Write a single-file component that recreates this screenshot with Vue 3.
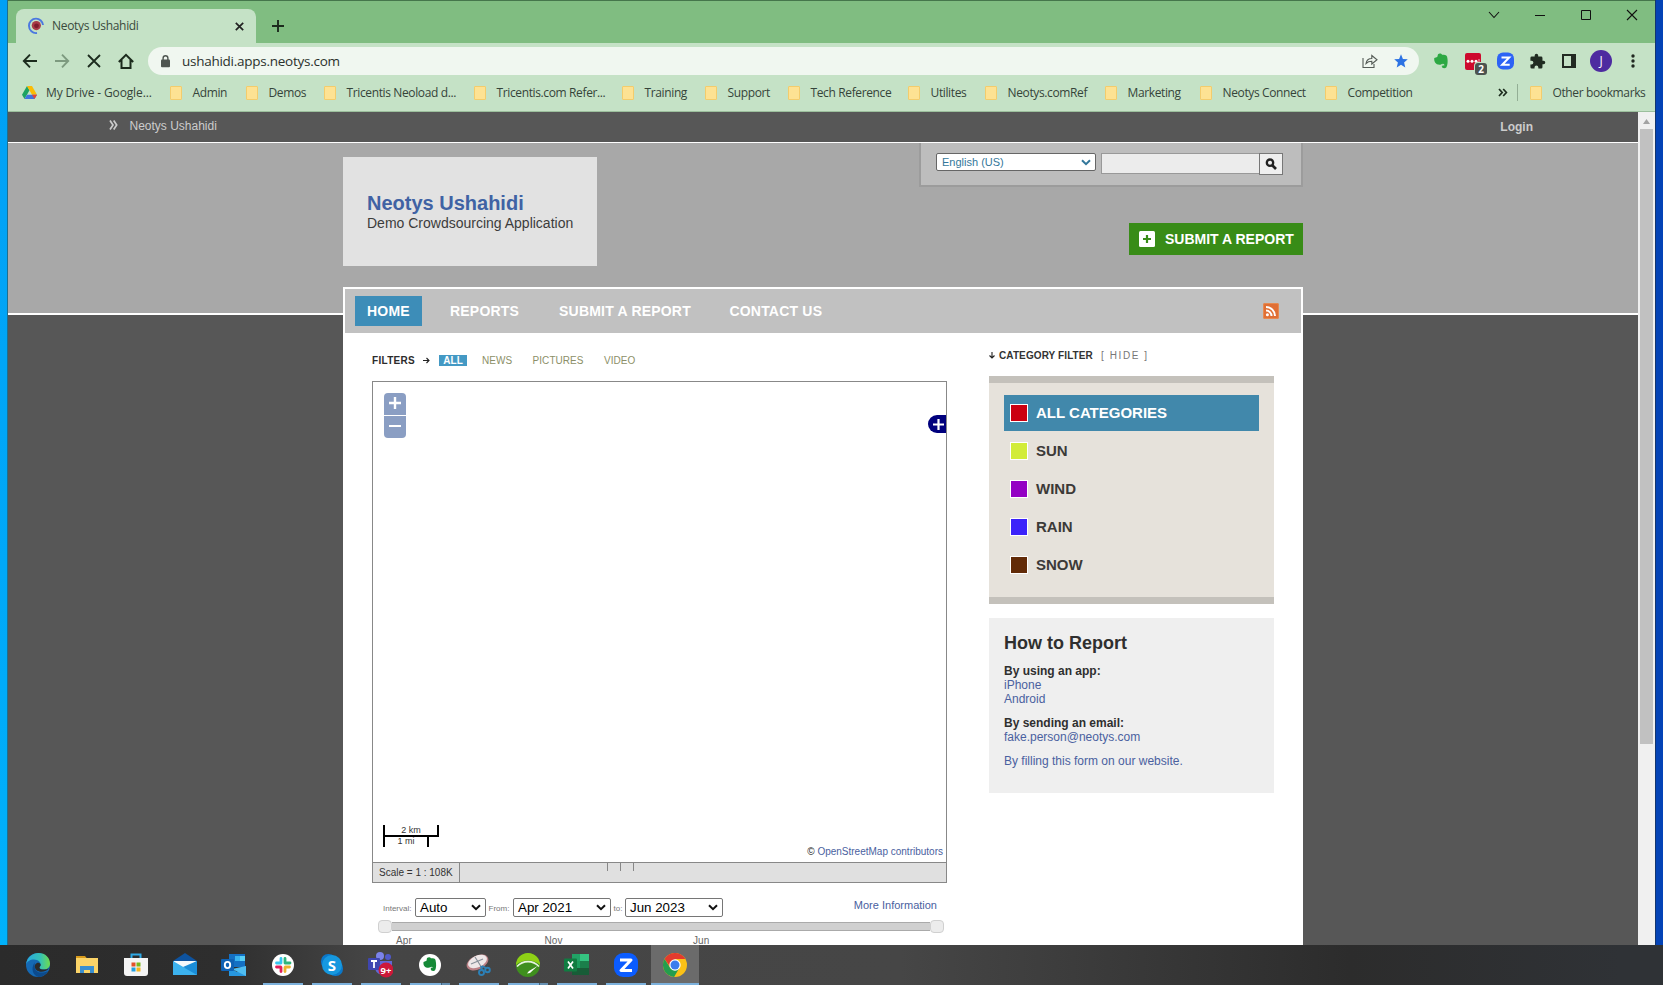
<script setup>
const bookmarks = [
  'Admin', 'Demos', 'Tricentis Neoload d...', 'Tricentis.com Refer...', 'Training', 'Support',
  'Tech Reference', 'Utilites', 'Neotys.comRef', 'Marketing', 'Neotys Connect', 'Competition'
]
const categories = [
  { name: 'ALL CATEGORIES', color: '#cb0010', active: true },
  { name: 'SUN', color: '#d2ec38' },
  { name: 'WIND', color: '#9400c4' },
  { name: 'RAIN', color: '#3b22fa' },
  { name: 'SNOW', color: '#622b08' }
]
</script>

<template>
  <div class="desktop">
    <div class="upper">
      <div class="strip left"></div>
      <div class="window">
        <header class="tabs">
          <div class="tab">
            <svg class="fav" width="16" height="18" viewBox="0 0 16 18">
              <circle cx="8.3" cy="8.6" r="4.6" fill="#a83a48" /><circle cx="8.5" cy="8.8" r="2.4" fill="#7c1b2d" />
              <path d="M8 1.6A7 7 0 0 1 15 8M8 1.6A7 7 0 0 0 1 9a7 7 0 0 0 8 7" fill="none" stroke="#4b78e0" stroke-width="1.9" />
            </svg>
            <span class="tabname">Neotys Ushahidi</span>
            <svg width="9" height="9" viewBox="0 0 9 9"><path d="M.8.8l7.4 7.4M8.2.8L.8 8.2" stroke="#222" stroke-width="1.7" /></svg>
          </div>
          <svg class="newtab" width="12" height="12" viewBox="0 0 12 12"><path d="M6 0v12M0 6h12" stroke="#1c2b1d" stroke-width="1.9" /></svg>
          <div class="controls">
            <svg width="12" height="12" viewBox="0 0 12 12"><path d="M1 3l5 5.5L11 3" fill="none" stroke="#111" stroke-width="1.1" /></svg>
            <svg width="12" height="12" viewBox="0 0 12 12"><path d="M1 6.5h10" stroke="#111" /></svg>
            <svg width="12" height="12" viewBox="0 0 12 12"><path d="M1.5 1.5h9v9h-9z" fill="none" stroke="#111" /></svg>
            <svg width="12" height="12" viewBox="0 0 12 12"><path d="M1 1l10 10M11 1L1 11" stroke="#111" stroke-width="1.1" /></svg>
          </div>
        </header>

        <div class="toolbar">
          <div class="navicons">
            <svg width="16" height="16" viewBox="0 0 16 16" fill="none" stroke="#1c2b1d" stroke-width="1.9"><path d="M15 8H2M8 1.7L1.8 8 8 14.3" /></svg>
            <svg width="16" height="16" viewBox="0 0 16 16" fill="none" stroke="#7d9a7f" stroke-width="1.9"><path d="M1 8h13M8 1.7L14.2 8 8 14.3" /></svg>
            <svg width="16" height="16" viewBox="0 0 16 16" fill="none" stroke="#1c2b1d" stroke-width="1.8"><path d="M2 2l12 12M14 2L2 14" /></svg>
            <svg width="16" height="16" viewBox="0 0 16 16" fill="none" stroke="#1c2b1d" stroke-width="2"><path d="M.8 9L8 1.8 15.2 9M3.5 7v8h9V7" /></svg>
          </div>
          <div class="urlbar">
            <svg class="lock" width="9" height="13" viewBox="0 0 9 13"><rect y="4.6" width="9" height="7.6" rx="1" fill="#4e5550" /><path d="M2.1 5V3.2a2.4 2.4 0 0 1 4.8 0V5" fill="none" stroke="#4e5550" stroke-width="1.4" /></svg>
            <span class="url">ushahidi.apps.neotys.com</span>
            <svg class="share" width="16" height="16" viewBox="0 0 16 16" fill="none" stroke="#555c57" stroke-width="1.1"><path d="M1 5v9.5h11V11M4 10.5c.5-3 2.4-5 5.8-5V2.5L15 6.8 9.8 11V8.3c-2.600 0-4.200.600-5.800 2.200z" /></svg>
            <svg width="14" height="14" viewBox="0 0 14 14"><path d="M7 .3l1.900 4.600 4.900.4-3.700 3.200 1.200 4.900L7 10.800l-4.300 2.600 1.200-4.900L.2 5.300l4.900-.4z" fill="#2c72e3" /></svg>
          </div>
          <div class="ext">
            <svg width="18" height="18" viewBox="0 0 24 24"><path d="M3 8l4-1.500L8 3c2-1.600 4.500-.8 5.500.5 3 .2 5.500 0 6.500 2.500 1.500 5 1 12-1 14.500-1.500 1.800-6 1.500-6-1.500s3-3 4-2.200c-3-3-4 .2-7 .2-5 0-7.500-4-7-9z" fill="#2da843" /><path d="M13 19c0-2.500 2.500-2.500 3-1.200" fill="none" stroke="#c5e2c6" stroke-width="1.600" /></svg>
            <div class="lastpass">
              <svg width="16" height="17" viewBox="0 0 16 17"><rect width="16" height="17" rx="2" fill="#cd0a2d" /><circle cx="3" cy="8.300" r="1.500" fill="#fff" /><circle cx="7" cy="8.300" r="1.500" fill="#fff" /><circle cx="11" cy="8.300" r="1.500" fill="#fff" /><path d="M14 6v4.500" stroke="#f5b6c0" /></svg>
              <span class="count">2</span>
            </div>
            <svg width="17" height="18" viewBox="0 0 17 18"><rect y=".5" width="17" height="17" rx="6" fill="#2d63f5" /><path d="M4.500 5.500h7.700l-7 7.200h7.500" fill="none" stroke="#fff" stroke-width="2" /></svg>
            <svg width="17" height="17" viewBox="0 0 24 24"><path d="M20.500 11H19V7a2 2 0 0 0-2-2h-4V3.500a2.500 2.500 0 0 0-5 0V5H4a2 2 0 0 0-2 2v3.800h1.500a2.700 2.700 0 0 1 0 5.400H2V20a2 2 0 0 0 2 2h3.800v-1.500a2.700 2.700 0 0 1 5.400 0V22H17a2 2 0 0 0 2-2v-4h1.500a2.500 2.500 0 0 0 0-5z" fill="#202c21" /></svg>
            <svg width="14" height="14" viewBox="0 0 14 14"><path d="M1 1h12v12H1z" fill="none" stroke="#222a22" stroke-width="2" /><path d="M9 1h4v12H9z" fill="#222a22" /></svg>
            <span class="avatar">J</span>
            <svg width="4" height="14" viewBox="0 0 4 14" fill="#202820"><circle cx="2" cy="2" r="1.700" /><circle cx="2" cy="7" r="1.700" /><circle cx="2" cy="12" r="1.700" /></svg>
          </div>
        </div>

        <div class="bookmarks">
          <div class="bm drive">
            <svg width="15" height="13" viewBox="0 0 15 13"><path d="M5 0L0 8.700l2.500 4.300 5-8.700z" fill="#1ea362" /><path d="M5 0h5l5 8.700h-5z" fill="#fbbc05" /><path d="M5 8.700h10L12.500 13h-10z" fill="#4175df" /><path d="M10 8.700h5L12.500 13z" fill="#ea4335" /></svg>
            <span>My Drive - Google...</span>
          </div>
          <div v-for="b in bookmarks" :key="b" class="bm"><i class="folder"></i><span>{{ b }}</span></div>
          <svg class="more" width="10" height="9" viewBox="0 0 10 9"><path d="M1 1l3.200 3.500L1 8M5.200 1l3.200 3.500L5.200 8" fill="none" stroke="#1c2b1d" stroke-width="1.700" /></svg>
          <div class="bm other"><i class="folder"></i><span>Other bookmarks</span></div>
        </div>

        <div class="viewport">
          <div class="page">
            <div class="topbar">
              <svg width="9" height="10" viewBox="0 0 9 10"><path d="M1 .5l3 4.500-3 4.500M4.700.5l3 4.500-3 4.500" fill="none" stroke="#ccc" stroke-width="1.700" /></svg>
              <span class="site">Neotys Ushahidi</span><span class="login">Login</span>
            </div>
            <div class="content">
              <div class="masthead">
                <div class="logo"><h1>Neotys Ushahidi</h1><p>Demo Crowdsourcing Application</p></div>
                <div class="tools">
                  <div class="langpanel">
                    <div class="lang"><span>English (US)</span><svg width="10" height="7" viewBox="0 0 10 7"><path d="M1 1.200l4 4 4-4" fill="none" stroke="#33779b" stroke-width="2" /></svg></div>
                    <div class="search"></div>
                    <div class="go"><svg width="12" height="12" viewBox="0 0 12 12" fill="none" stroke="#222"><circle cx="5" cy="4.700" r="3.200" stroke-width="2.300" /><path d="M7 7l4 4" stroke-width="2.600" /></svg></div>
                  </div>
                  <div class="submit"><svg width="16" height="16" viewBox="0 0 16 16"><rect width="16" height="16" rx="1.500" fill="#fff" /><path d="M8 4v8M4 8h8" stroke="#388c17" stroke-width="2.200" /></svg><span>SUBMIT A REPORT</span></div>
                </div>
              </div>

              <main>
                <nav>
                  <a class="on">HOME</a><a>REPORTS</a><a>SUBMIT A REPORT</a><a>CONTACT US</a>
                  <svg class="rss" width="16" height="16" viewBox="0 0 16 16"><rect width="16" height="16" rx="2" fill="#e06f35" /><rect x=".5" y=".5" width="15" height="15" rx="1.500" fill="none" stroke="#e78a50" /><g fill="none" stroke="#fff" stroke-width="2"><path d="M3 7.500a5.500 5.500 0 0 1 5.500 5.500M3 4a9 9 0 0 1 9 9" /></g><circle cx="4.400" cy="11.700" r="1.500" fill="#fff" /></svg>
                </nav>
                <div class="cols">
                  <section class="maincol">
                    <div class="filters">
                      <b>FILTERS</b>
                      <svg width="7" height="7" viewBox="0 0 7 7"><path d="M0 3.500h6M3.500 1L6 3.500 3.500 6" fill="none" stroke="#222" stroke-width="1.100" /></svg>
                      <span class="all">ALL</span><span>NEWS</span><span>PICTURES</span><span>VIDEO</span>
                    </div>
                    <div class="map">
                      <div class="zoomers">
                        <svg width="22" height="22" viewBox="0 0 22 22"><path d="M11 4v12M5 10h12" stroke="#fff" stroke-width="2.400" /></svg>
                        <svg width="22" height="22" viewBox="0 0 22 22"><path d="M5 10h12" stroke="#fff" stroke-width="2.200" /></svg>
                      </div>
                      <div class="layers"><svg width="11" height="11" viewBox="0 0 11 11"><path d="M5.500 0v11M0 5.500h11" stroke="#fff" stroke-width="2.200" /></svg></div>
                      <div class="scalebar"><div class="km">2 km</div><div class="mi">1 mi</div></div>
                      <div class="credit">© <a>OpenStreetMap contributors</a></div>
                    </div>
                    <div class="status"><span>Scale = 1 : 108K</span><i></i><i></i><i></i></div>
                    <div class="timeline">
                      <label class="l1">Interval:</label>
                      <div class="sel s1">Auto<svg width="10" height="7" viewBox="0 0 10 7"><path d="M1 1.200l4 4 4-4" /></svg></div>
                      <label class="l2">From:</label>
                      <div class="sel s2">Apr 2021<svg width="10" height="7" viewBox="0 0 10 7"><path d="M1 1.200l4 4 4-4" /></svg></div>
                      <label class="l3">to:</label>
                      <div class="sel s2">Jun 2023<svg width="10" height="7" viewBox="0 0 10 7"><path d="M1 1.200l4 4 4-4" /></svg></div>
                      <a>More Information</a>
                    </div>
                    <div class="slider"><i></i><div class="track"></div><i></i></div>
                    <div class="ticks"><span>Apr</span><span>Nov</span><span>Jun</span></div>
                  </section>
                  <aside>
                    <div class="cathead">
                      <svg width="6" height="7" viewBox="0 0 6 7"><path d="M3 0v6M.5 3.500L3 6l2.500-2.500" fill="none" stroke="#222" stroke-width="1.100" /></svg>
                      <b>CATEGORY FILTER</b><span>[ HIDE ]</span>
                    </div>
                    <div class="cats">
                      <div v-for="c in categories" :key="c.name" class="cat" :class="{ active: c.active }">
                        <i :style="{ background: c.color }"></i><b>{{ c.name }}</b>
                      </div>
                    </div>
                    <div class="howto">
                      <h2>How to Report</h2>
                      <p><b>By using an app:</b><br /><a>iPhone</a><br /><a>Android</a></p>
                      <p><b>By sending an email:</b><br /><a>fake.person@neotys.com</a></p>
                      <p><a>By filling this form on our website.</a></p>
                    </div>
                  </aside>
                </div>
              </main>
            </div>
          </div>
          <div class="scroll"><svg width="7" height="5" viewBox="0 0 7 5"><path d="M0 5L3.500 0 7 5z" fill="#a3a3a3" /></svg><div class="thumb"></div></div>
        </div>
      </div>
      <div class="strip right"></div>
    </div>

    <footer>
      <div class="app"><svg width="24" height="24" viewBox="0 0 24 24"><defs><linearGradient id="e1" x1="0" x2="1"><stop offset="0" stop-color="#2aa9e0" /><stop offset=".6" stop-color="#35c1b5" /><stop offset="1" stop-color="#6fdc4c" /></linearGradient></defs><circle cx="12" cy="12" r="12" fill="#1569b4" /><path d="M0 11.500C1 4 6.500 0 12.500 0 19.500 0 24 5 24 10.500c0 4-3 6-6.500 6-3 0-4.500-1.200-4-2.300C17 10 12 6.500 8 6.500c-4 0-7 2-8 5z" fill="url(#e1)" /><path d="M8.500 13c0 6 6 8.500 13.500 5-2 3.500-5.500 6-9.500 6C7 22.500 4.500 16 8.500 9.500z" fill="#0c4a8c" /><path d="M13.500 14.200c-.5 1.500 2 2.500 5 2.300 1.500-.1 3-.5 4.300-1.300-2 4-12.500 5.500-14-1-.5-4 4.500-6.200 5.900-2.500.2 1-.8 1.700-1.200 2.500z" fill="#2b2b2b" /></svg></div>
      <div class="app"><svg width="24" height="24" viewBox="0 0 24 24"><path d="M1 3h9l2 2.500H1z" fill="#d99b1c" /><path d="M1 5h22v15H1z" fill="#fbd468" /><path d="M5 20v-7h14v7h-4v-3H9v3z" fill="#3a8fd0" /></svg></div>
      <div class="app"><svg width="24" height="24" viewBox="0 0 24 24"><path d="M7.500 6V1.500h9V6" fill="none" stroke="#2ea9e6" stroke-width="2" /><path d="M0 5h24v15a3 3 0 0 1-3 3H3a3 3 0 0 1-3-3z" fill="#f4f4f4" /><path d="M7.500 9.500h4v4h-4z" fill="#e3502b" /><path d="M12.500 9.500h4v4h-4z" fill="#7bb71c" /><path d="M7.500 14.500h4v4h-4z" fill="#249fe0" /><path d="M12.500 14.500h4v4h-4z" fill="#f5b51d" /></svg></div>
      <div class="app"><svg width="24" height="24" viewBox="0 0 24 24"><path d="M0 8l12-8 12 8v3H0z" fill="#0e539f" /><path d="M1 8h22v9H1z" fill="#f4f8fb" /><path d="M0 8l12 7L24 8v14H0z" fill="#3cb2ee" /><path d="M24 8v14L10 14z" fill="#1a8dd8" /></svg></div>
      <div class="app"><svg width="25" height="24" viewBox="0 0 25 24"><path d="M8 1h16v13H8z" fill="#1470c4" /><path d="M14 3h5v5h-5z" fill="#39b3ef" /><path d="M19 3h5v5h-5z" fill="#58cff6" /><path d="M8 14l8 5 9-6v10H8z" fill="#2797df" /><path d="M25 13v10L11 16z" fill="#50bdf0" /><rect y="6" width="13" height="12" rx="1" fill="#0f62b4" /><ellipse cx="6.500" cy="12" rx="2.700" ry="3.100" fill="none" stroke="#fff" stroke-width="1.900" /></svg></div>
      <div class="app run"><svg width="22" height="22" viewBox="0 0 22 22"><circle cx="11" cy="11" r="11" fill="#fff" /><g fill="none" stroke-width="2.800" stroke-linecap="round"><path d="M9 4.500v4M4.500 9H9" stroke="#36c5f0" /><path d="M13 4.500V9M13.500 9H18" stroke="#2eb67d" /><path d="M13 13.500v4M13.500 13H17.500" stroke="#ecb22e" /><path d="M9 13.500v4M4.500 13H8.500" stroke="#e01e5a" /></g></svg></div>
      <div class="app run"><svg width="22" height="22" viewBox="0 0 22 22"><rect width="15" height="15" rx="7" fill="#0b77c8" /><rect x="7" y="7" width="15" height="15" rx="7" fill="#0b77c8" /><circle cx="11" cy="11" r="10" fill="#1698df" /><text x="11" y="16.500" text-anchor="middle" class="glyph">S</text></svg></div>
      <div class="app run"><svg width="25" height="26" viewBox="0 0 25 26"><circle cx="12" cy="4" r="4" fill="#7b83eb" /><circle cx="20" cy="5" r="3" fill="#5059c9" /><path d="M6 9h18v8q-1 5-8 6-7 0-9-6z" fill="#6168d4" /><rect y="6" width="12" height="12" rx="1" fill="#3f46b0" /><path d="M3 9h6M6 9v7" stroke="#fff" stroke-width="1.800" /><circle cx="18" cy="18" r="7.500" fill="#cc1839" /><text x="18" y="21.800" text-anchor="middle" class="nine">9+</text></svg></div>
      <div class="app run split"><svg width="22" height="22" viewBox="0 0 22 22"><circle cx="11" cy="11" r="11" fill="#fff" /><path d="M4.500 8l3-1.200L8 4c2-1.300 3.300-.7 4 .3 2.500.1 4 .2 4.500 1.700 1 4 .8 8-.3 10-1 1.700-4.500 1.400-4.500-.9 0-1.700 1.800-1.800 2.600-1.400-1.800-2-2.600.1-4.800.1-3.500 0-5.500-2-5-5.800z" fill="#168a38" /></svg></div>
      <div class="app run"><svg width="25" height="24" viewBox="0 0 25 24"><ellipse cx="11.500" cy="9.500" rx="11.500" ry="7" transform="rotate(-25 11.500 9.500)" fill="#bb8086" /><ellipse cx="11.500" cy="8.500" rx="10" ry="5.800" transform="rotate(-25 11.500 8.500)" fill="#eee7e8" /><path d="M5 11l12-5M9 4l7 11" stroke="#899099" stroke-width="1.200" /><g fill="none" stroke="#2c80b7" stroke-width="1.900"><circle cx="15.500" cy="19.500" r="2.500" /><circle cx="21.500" cy="17" r="2.300" /><path d="M16 17l-1-4M20 15l-4-2" /></g></svg></div>
      <div class="app run split"><svg width="24" height="24" viewBox="0 0 24 24"><circle cx="12" cy="12" r="12" fill="#3f8f1e" /><path d="M0 12a12 12 0 0 1 24 0c-6-6-18-6-24 0z" fill="#8fd016" /><path d="M1 13.500c6-6.500 16-6.500 22 0" fill="none" stroke="#e8f5dc" stroke-width="1.700" /><path d="M11 20.500l2-2.500 8.500-5-7.500 7z" fill="#fff" /></svg></div>
      <div class="app run"><svg width="25" height="24" viewBox="0 0 25 24"><path d="M8 1h17v21H8z" fill="#1a9c5c" /><path d="M16 1h9v7h-9z" fill="#35c481" /><path d="M8 1h8v7H8z" fill="#21a366" /><path d="M8 15h17v7H8z" fill="#185c37" /><path d="M16 8h9v7h-9z" fill="#1b7f4b" /><rect y="5.500" width="13" height="13" rx="1" fill="#107c41" /><path d="M4 8.500l5 7M9 8.500l-5 7" stroke="#fff" stroke-width="1.700" /></svg></div>
      <div class="app run"><svg width="24" height="24" viewBox="0 0 24 24"><rect width="24" height="24" rx="9" fill="#0b5cff" /><path d="M6 7h11L7 17.500h11" fill="none" stroke="#fff" stroke-width="3" stroke-linejoin="round" /></svg></div>
      <div class="app run current"><svg width="24" height="24" viewBox="0 0 24 24"><circle cx="12" cy="12" r="12" fill="#fbc116" /><path d="M1.600 6A12 12 0 0 1 22.400 6H12L8 15z" fill="#e33b2e" /><path d="M1.600 6a12 12 0 0 0 9.500 18l5.500-9.500H7z" fill="#249d4e" /><circle cx="12" cy="12" r="5.700" fill="#fff" /><circle cx="12" cy="12" r="4.500" fill="#3a7ded" /></svg></div>
    </footer>
  </div>
</template>

<style>
body { margin: 0; overflow: hidden; }
</style>

<style scoped>
* { box-sizing: border-box; }
h1, h2, p { margin: 0; }
svg { display: block; flex: none; }
.desktop { width: 1663px; height: 985px; overflow: hidden; font-family: "Liberation Sans", Arial, sans-serif; }
.upper { display: flex; height: 945px; overflow: hidden; }
.strip { width: 8px; flex: none; }
.left { background: linear-gradient(#00a0f5, #00a8f8 60%, #00b2fb); border-right: 1px solid #1f6f8e; }
.right { background: #0443b6; border-left: 1px solid #12356e; }
.window { width: 1647px; display: flex; flex-direction: column; background: #c5e2c6; }

.tabs { height: 43px; flex: none; display: flex; background: #80bd81; border-top: 1px solid #45764b; font-family: "Open Sans", "Noto Sans", sans-serif; }
.tab { width: 240px; height: 34px; margin: 8px 0 0 8px; padding: 0 12px 0 12px; display: flex; align-items: center; background: #c5e2c6; border-radius: 8px 8px 0 0; font-size: 12px; letter-spacing: -.32px; color: #3a4a3c; }
.tabname { flex: 1; margin: -2px 0 0 8px; }
.newtab { margin: 19px 0 0 16px; }
.controls { display: flex; gap: 34px; margin: 8px 17px 0 auto; }

.toolbar { height: 36px; flex: none; display: flex; align-items: center; font-family: "Open Sans", "Noto Sans", sans-serif; }
.navicons { display: flex; gap: 16px; margin-left: 14px; width: 126px; flex: none; }
.urlbar { width: 1271px; height: 28px; border-radius: 14px; background: #f0f7f0; display: flex; align-items: center; padding: 0 11px 0 13px; }
.url { margin-left: 12px; font-size: 13.500px; letter-spacing: -.26px; color: #2b312c; }
.share { margin: 0 16px 0 auto; }
.ext { flex: 1; display: grid; grid-template-columns: repeat(7, 32px); justify-items: center; align-items: center; margin-left: 6px; }
.lastpass { position: relative; }
.count { position: absolute; left: 10px; top: 10px; width: 12px; height: 12px; border-radius: 3px; background: #4c5350; color: #fff; font-size: 10px; font-weight: bold; line-height: 12px; text-align: center; box-shadow: 0 0 0 1px #c5e2c6; }
.avatar { width: 22px; height: 22px; border-radius: 50%; background: #4d2ba0; color: #fff; font-size: 12px; line-height: 22px; text-align: center; }

.bookmarks { height: 33px; flex: none; border-bottom: 1px solid #9cbf9d; padding-bottom: 5px; display: grid; align-items: center; grid-template-columns: 148px 76px 78px 150px 148px 83px 83px 120px 77px 120px 95px 125px 173px 19px 1fr; padding-left: 14px; font-family: "Open Sans", "Noto Sans", sans-serif; font-size: 12px; letter-spacing: -.37px; color: #35443a; }
.bm { display: flex; align-items: center; white-space: nowrap; }
.bm span { margin-left: 10.500px; }
.bm.drive span { margin-left: 9px; letter-spacing: -.13px; }
.folder { width: 12px; height: 14px; background: #fde293; border: 1px solid #f3cc6c; border-radius: 1px; flex: none; }
.other { border-left: 1px solid #93ae95; height: 17px; padding-left: 12px; }

.viewport { flex: 1; display: flex; min-height: 0; }
.page { width: 1630px; overflow: hidden; background: linear-gradient(#575757 30px, #fff 30px, #fff 31px, #a8a8a8 31px, #a8a8a8 201px, #fff 201px, #fff 203px, #575757 203px); }
.topbar { height: 31px; display: flex; padding: 8px 105px 0 101px; font-size: 12px; line-height: 12px; color: #ccc; }
.site { margin-left: 11.500px; flex: 1; }
.login { font-weight: bold; padding-top: 1px; }
.content { margin-left: 335px; width: 960px; }
.masthead { height: 144px; display: flex; justify-content: space-between; }
.logo { margin-top: 14px; width: 254px; height: 109px; background: #e2e2e2; padding: 35px 0 0 24px; }
.logo h1 { font-size: 20px; line-height: 22px; color: #4062a4; }
.logo p { font-size: 14px; line-height: 19px; color: #3c3c3c; white-space: nowrap; }
.tools { display: flex; flex-direction: column; align-items: flex-end; gap: 36px; }
.langpanel { width: 384px; height: 44px; border: 2px solid #9c9c9c; border-top: 0; background: #bdbdbd; display: flex; padding: 10px 0 0 15px; }
.lang { width: 160px; height: 18px; border: 1px solid #666; border-radius: 2px; background: #fff; display: flex; align-items: center; justify-content: space-between; padding: 0 4px 0 5px; font-size: 11px; color: #33779b; }
.search { width: 159px; height: 21px; margin-left: 5px; background: #ececec; border: 1px solid #999; }
.go { width: 24px; height: 22px; margin-left: -1px; border: 1px solid #777; background: #efefef; display: flex; align-items: center; justify-content: center; padding-right: 1px; }
.submit { width: 174px; height: 32px; background: #388c17; color: #fff; font-weight: bold; font-size: 14px; display: flex; align-items: center; gap: 10px; padding-left: 10px; white-space: nowrap; }

main { height: 700px; background: #fff; padding: 2px; }
nav { height: 44px; background: #c1c1c1; display: flex; align-items: center; padding: 0 22px 0 10px; color: #fff; font-weight: bold; font-size: 14px; letter-spacing: .2px; }
nav a { height: 30px; line-height: 30px; padding: 0 12px; margin-right: 16px; white-space: nowrap; }
nav a.on { background: #3d8db8; width: 67px; }
nav a:nth-child(3) { margin-right: 14.500px; }
.rss { margin-left: auto; }
.cols { display: flex; gap: 42px; padding-left: 27px; }
.maincol { width: 575px; padding-top: 17px; }
.filters { height: 21px; display: flex; align-items: center; font-size: 10px; line-height: 11px; color: #8c8f67; margin-bottom: 10px; letter-spacing: .06px; }
.filters b { letter-spacing: .3px; color: #2c2c2c; width: 51px; }
.filters span { margin-left: 20.400px; }
.filters .all { margin-left: 9px; width: 28px; text-align: center; background: #4499c4; color: #fff; font-weight: bold; margin-right: -5.500px; }
.map { position: relative; height: 481px; border: 1px solid #888; border-bottom: 0; }
.zoomers { position: absolute; left: 11px; top: 11px; display: grid; gap: 1px; }
.zoomers svg { background: #8a9ec3; border-radius: 4px 4px 0 0; }
.zoomers svg + svg { border-radius: 0 0 4px 4px; }
.layers { position: absolute; right: 0; top: 33px; width: 18px; height: 18px; background: #00007d; border-radius: 9px 0 0 9px; display: flex; align-items: center; padding-left: 5px; }
.scalebar { position: absolute; left: 10px; top: 443px; font-size: 9px; color: #333; text-align: center; }
.km { width: 56px; height: 12px; border: 2px solid #000; border-top: 0; line-height: 11px; }
.mi { width: 46px; height: 10px; border: solid #000; border-width: 0 2px; line-height: 9px; }
.credit { position: absolute; right: 3px; bottom: 5px; font-size: 10px; line-height: 10px; color: #222; }
a { color: #4a61a0; }
nav a { color: #fff; }
.status { height: 21px; border: 1px solid #888; background: #e0e0e0; display: flex; font-size: 10px; line-height: 19px; color: #333; }
.status span { width: 87px; padding-left: 6px; border-right: 1px solid #888; margin-right: 147px; white-space: nowrap; }
.status i { width: 1px; height: 8px; background: #888; margin-right: 12px; }
.timeline { display: flex; height: 19px; margin-top: 15px; padding-left: 11px; white-space: nowrap; }
.timeline label { font-size: 8px; line-height: 22px; color: #777; }
.l1 { width: 32px; }
.l2 { width: 27px; padding-left: 2.500px; }
.l3 { width: 14px; padding-left: 2.500px; }
.sel { height: 19px; border: 1px solid #767676; border-radius: 2px; font-size: 13.330px; line-height: 18px; padding: 0 4px; display: flex; justify-content: space-between; color: #000; }
.sel svg { margin-top: 5px; fill: none; stroke: #111; stroke-width: 2; }
.s1 { width: 71px; }
.s2 { width: 98px; }
.timeline a { margin-left: auto; margin-right: 10px; font-size: 11px; line-height: 14px; }
.slider { display: flex; margin: 3px 3px 0 6px; align-items: center; height: 13px; }
.slider i { width: 14px; height: 13px; border: 1px solid #d0d0d0; border-radius: 4px; background: #ececec; flex: none; }
.track { flex: 1; height: 9px; background: #d0d0d0; border: solid #aaa; border-width: 1px 0; }
.ticks { display: grid; grid-template-columns: 148.500px 148.500px 1fr; padding-left: 24px; font-size: 10px; line-height: 11px; color: #666; letter-spacing: .1px; margin-top: 2px; }
aside { width: 285px; padding-top: 12px; }
.cathead { height: 21px; display: flex; align-items: center; font-size: 10px; margin-bottom: 10px; color: #777; }
.cathead b { margin: 0 8px 0 4px; color: #333; letter-spacing: .1px; white-space: nowrap; }
.cathead span { letter-spacing: 1.600px; }
.cats { height: 228px; border: solid #c4c1bb; border-width: 7px 0; background: #e6e2db; padding: 12px 15px; }
.cat { height: 36px; margin-bottom: 2px; display: flex; align-items: center; padding-left: 6px; font-size: 15px; color: #3c3a38; }
.cat i { width: 18px; height: 18px; border: 1px solid #fff; margin-right: 8px; }
.cat b { margin-top: -1px; }
.cat.active { background: #4188ab; color: #fff; }
.howto { margin-top: 14px; height: 175px; background: #efefef; padding: 15px; font-size: 12px; line-height: 14px; color: #2f2f2f; }
.howto h2 { font-size: 18px; line-height: 20px; margin-bottom: 11px; }
.howto p { margin-bottom: 10px; }
.scroll { width: 17px; background: #f0f0f0; display: flex; flex-direction: column; align-items: center; padding-top: 7px; }
.thumb { width: 13px; height: 615px; background: #c1c1c1; margin-top: 5px; }

footer { height: 40px; display: flex; padding-left: 13px; background: linear-gradient(90deg, #2b2b2b, #2e2e2e 220px, #454545 370px, #464646 900px, #2c2c2c 1350px, #2f3236 1620px, #2f3236); }
.app { width: 49px; height: 40px; display: flex; align-items: center; justify-content: center; position: relative; }
.run::after { content: ""; position: absolute; left: 5px; bottom: 0; width: 40px; height: 2px; background: #7cb1dc; }
.split::after { background: linear-gradient(90deg, #7cb1dc 31px, #47637a 31px, #47637a 32px, #6690b2 32px); }
.current { background: linear-gradient(90deg, transparent 1px, #6b6b6b 1px); }
.current::after { left: 1px; width: 48px; }
.glyph { font: bold 15px "Open Sans", sans-serif; fill: #fff; }
.nine { font: bold 9.500px "Open Sans", sans-serif; fill: #fff; }
</style>
